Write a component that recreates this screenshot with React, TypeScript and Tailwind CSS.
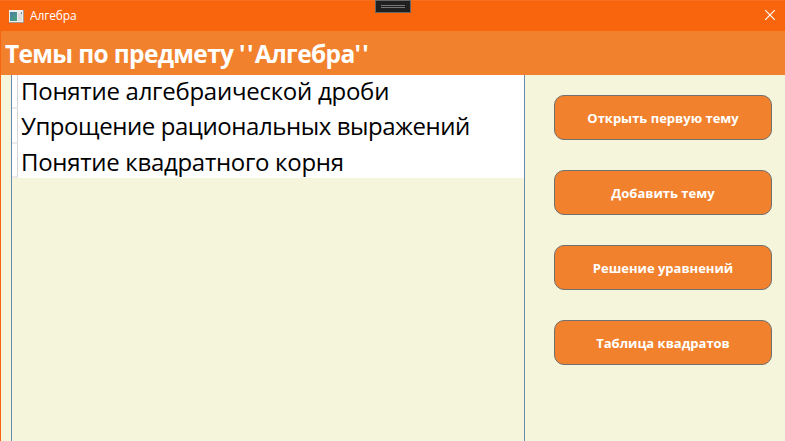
const topics = [
  { title: 'Понятие алгебраической дроби', height: 'h-[34px]', spacing: 'leading-[32px] tracking-[-0.26px]' },
  { title: 'Упрощение рациональных выражений', height: 'h-[35px]', spacing: 'leading-[34px] tracking-[-0.43px]' },
  { title: 'Понятие квадратного корня', height: 'h-[34px]', spacing: 'leading-[36px] tracking-[-0.29px]' },
];

const actions = [
  'Открыть первую тему',
  'Добавить тему',
  'Решение уравнений',
  'Таблица квадратов',
];

function WindowIcon() {
  return (
    <svg width="16" height="13" viewBox="0 0 16 13" shapeRendering="crispEdges">
      <defs>
        <linearGradient id="pane" x1="0" y1="0" x2="1" y2="1">
          <stop offset="0" stopColor="#4b7fa3" />
          <stop offset="1" stopColor="#45a27a" />
        </linearGradient>
      </defs>
      <rect x="1" width="15" height="13" fill="#a89a90" />
      <rect x="1" y="0" width="14" height="12" fill="#eeeeee" />
      <rect x="2" y="2" width="7" height="9" fill="url(#pane)" />
      <rect x="10" y="3" width="4" height="8" fill="#dcdcdc" />
      <rect x="13" y="2" width="1" height="2" fill="#6f8fa0" />
    </svg>
  );
}

function TitleBar() {
  return (
    <div className="flex h-[31px] shrink-0 items-center border-t border-[#fa6e20] bg-[#f9650d] pl-2 pr-[9px] text-white">
      <WindowIcon />
      <span className="ml-[6px] text-[12px] leading-4 tracking-[-0.15px]">Алгебра</span>
      <svg className="mb-[2px] ml-auto" width="12" height="12" viewBox="0 0 12 12">
        <path d="M1.2 1.2l9.6 9.6M10.8 1.2l-9.6 9.6" stroke="#fff" strokeWidth="1.15" />
      </svg>
    </div>
  );
}

export default function App() {
  return (
    <div className="relative flex h-[441px] w-[785px] flex-col overflow-hidden bg-[#f5f5dc] font-['Open_Sans','Noto_Sans',sans-serif]">
      <TitleBar />
      <div className="absolute left-[375px] top-0 flex h-[13px] w-9 flex-col items-center gap-px border border-[#666] bg-[#202020] pt-1">
        <div className="h-px w-6 bg-[#777]" />
        <div className="h-px w-6 bg-[#777]" />
      </div>
      <div className="flex min-h-0 flex-1 flex-col border-l border-[#f9650d]">
        <h1 className="flex h-11 shrink-0 items-center whitespace-nowrap bg-[#f1812d] pl-1 pt-[3px] text-[24.5px] font-bold text-white">
          <span className="whitespace-pre tracking-[-0.66px]">Темы по предмету <span className="tracking-[1.3px]">''</span>Алгебра<span className="tracking-[1.3px]">''</span></span>
        </h1>
        <div className="flex min-h-0 flex-1">
          <div className="ml-[10px] w-[514px] border-x border-[#688caf]">
            {topics.map((t) => (
              <div key={t.title} className={`flex bg-white ${t.height}`}>
                <div className="w-[6px] border-b-2 border-r border-b-[#ebebeb] border-r-[#d5d5d5]" />
                <div className={`whitespace-nowrap pl-[3px] text-[24px] text-black ${t.spacing}`}>
                  {t.title}
                </div>
              </div>
            ))}
          </div>
          <div className="ml-[29px] flex w-[218px] flex-col gap-[30px] pt-5">
            {actions.map((label) => (
              <button
                key={label}
                className="h-[45px] whitespace-nowrap rounded-[10px] border border-[#707070] bg-[#f1812d] pt-[2px] text-[13px] font-bold text-white"
              >
                {label}
              </button>
            ))}
          </div>
        </div>
      </div>
    </div>
  );
}
